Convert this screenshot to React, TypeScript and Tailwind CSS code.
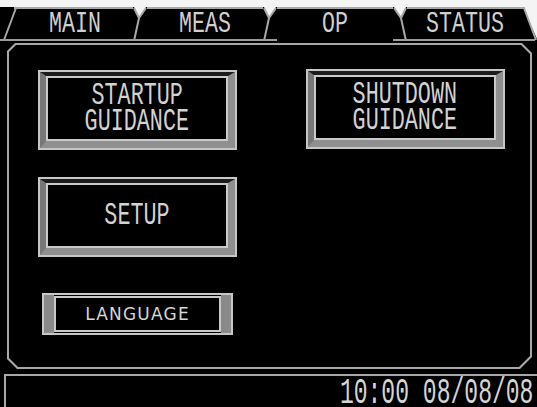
import React from "react";

const mono = "font-['Liberation_Mono','DejaVu_Sans_Mono',monospace]";

// slanted divider between two tabs; "flip" sends the stem to the right
const TabDivider = ({ flip }: { flip?: boolean }) => (
  <div className="w-[14px] h-full shrink-0">
    <svg width="14" height="34" viewBox="0 0 14 34">
      <polygon points={flip ? "1,0 13,0 8,11" : "1,0 13,0 6,11"} fill="#f4f4f4" />
      <polyline
        points={flip ? "1,1 8,11 13,1" : "1,1 6,11 13,1"}
        fill="none"
        stroke="#a8a8a8"
        strokeWidth="2"
      />
      <line
        x1={flip ? 8 : 6}
        y1="11"
        x2={flip ? 13 : 1}
        y2="34"
        stroke="#a8a8a8"
        strokeWidth="2"
      />
      <rect x="0" y="32" width="14" height="2" fill="#9c9c9c" />
    </svg>
  </div>
);

const Tab = ({ label, active }: { label: string; active?: boolean }) => (
  <div
    className={`flex-1 flex items-center justify-center border-t-2 border-b-2 border-t-[#a8a8a8] ${
      active ? "border-b-black" : "border-b-[#9c9c9c]"
    }`}
  >
    <span className={`${mono} inline-block scale-x-[0.72] text-[30px] leading-none text-[#cfcfcf]`}>
      {label}
    </span>
  </div>
);

const BevelButton = ({ lines }: { lines: string[] }) => (
  <div className="w-[199px] h-[80px] border-2 border-[#c6c6c6] flex">
    <div className="flex-1 flex border-t-[4px] border-l-[6px] border-r-[7px] border-b-[7px] border-t-[#1c1c1c] border-l-[#777777] border-r-[#8f8f8f] border-b-[#8f8f8f]">
      <div className="flex-1 border-2 border-[#cacaca] bg-black flex flex-col items-center justify-center">
        {lines.map((line) => (
          <span
            key={line}
            className={`${mono} inline-block scale-x-[0.68] text-[32px] leading-[26px] text-[#d2d2d2]`}
          >
            {line}
          </span>
        ))}
      </div>
    </div>
  </div>
);

const LanguageButton = () => (
  <div className="ml-[4px] w-[191px] h-[42px] border-2 border-[#c6c6c6] flex bg-black">
    <div className="w-[10px] bg-[#8a8a8a]" />
    <div className="flex-1 my-[1px] border-2 border-[#c8c8c8] flex items-center justify-center">
      <span className="font-['DejaVu_Sans',sans-serif] text-[17px] tracking-[1.2px] leading-none text-[#d6d6d6]">
        LANGUAGE
      </span>
    </div>
    <div className="w-[10px] bg-[#8a8a8a]" />
  </div>
);

export default function App() {
  return (
    <div className="w-[537px] h-[407px] bg-black flex flex-col overflow-hidden">
      <div className="h-[7px] bg-[#f4f4f4] shrink-0" />

      {/* tab strip */}
      <div className="h-[34px] flex shrink-0">
        <div className="w-[17px] shrink-0">
          <svg width="17" height="34" viewBox="0 0 17 34">
            <rect x="14" y="0" width="3" height="2" fill="#a8a8a8" />
            <line x1="16" y1="1" x2="4" y2="33" stroke="#a8a8a8" strokeWidth="2" />
            <rect x="0" y="32" width="17" height="2" fill="#9c9c9c" />
          </svg>
        </div>
        <Tab label="MAIN" />
        <TabDivider />
        <Tab label="MEAS" />
        <TabDivider />
        <Tab label="OP" active />
        <TabDivider flip />
        <Tab label="STATUS" />
        <div className="w-[14px] shrink-0">
          <svg width="14" height="34" viewBox="0 0 14 34">
            <polygon points="0,0 14,0 14,32" fill="#f4f4f4" />
            <rect x="0" y="0" width="2" height="2" fill="#a8a8a8" />
            <line x1="1" y1="1" x2="13" y2="33" stroke="#a8a8a8" strokeWidth="2" />
            <rect x="0" y="32" width="12" height="2" fill="#9c9c9c" />
          </svg>
        </div>
      </div>

      {/* operation panel */}
      <div className="mt-[2px] ml-[7px] w-[525px] h-[326px] shrink-0 bg-[#a8a8a8] p-[2px] [clip-path:polygon(8px_0,calc(100%_-_10px)_0,100%_10px,100%_calc(100%_-_12px),calc(100%_-_12px)_100%,10px_100%,0_calc(100%_-_10px),0_8px)]">
        <div className="w-full h-full bg-black flex gap-[69px] pl-[29px] pt-[24px] [clip-path:polygon(7px_0,calc(100%_-_9px)_0,100%_9px,100%_calc(100%_-_11px),calc(100%_-_11px)_100%,9px_100%,0_calc(100%_-_9px),0_7px)]">
          <div className="flex flex-col">
            <div className="mt-[1px]">
              <BevelButton lines={["STARTUP", "GUIDANCE"]} />
            </div>
            <div className="mt-[27px]">
              <BevelButton lines={["SETUP"]} />
            </div>
            <div className="mt-[36px]">
              <LanguageButton />
            </div>
          </div>
          <div className="flex flex-col">
            <BevelButton lines={["SHUTDOWN", "GUIDANCE"]} />
          </div>
        </div>
      </div>

      {/* status line */}
      <div className="mt-[5px] ml-[4px] flex-1 border-t-2 border-l-2 border-[#a8a8a8] flex items-center justify-end pr-[4px]">
        <span className={`${mono} inline-block origin-right scale-x-[0.64] text-[36px] leading-none text-[#d4d4d4]`}>
          10:00 08/08/08
        </span>
      </div>
    </div>
  );
}
